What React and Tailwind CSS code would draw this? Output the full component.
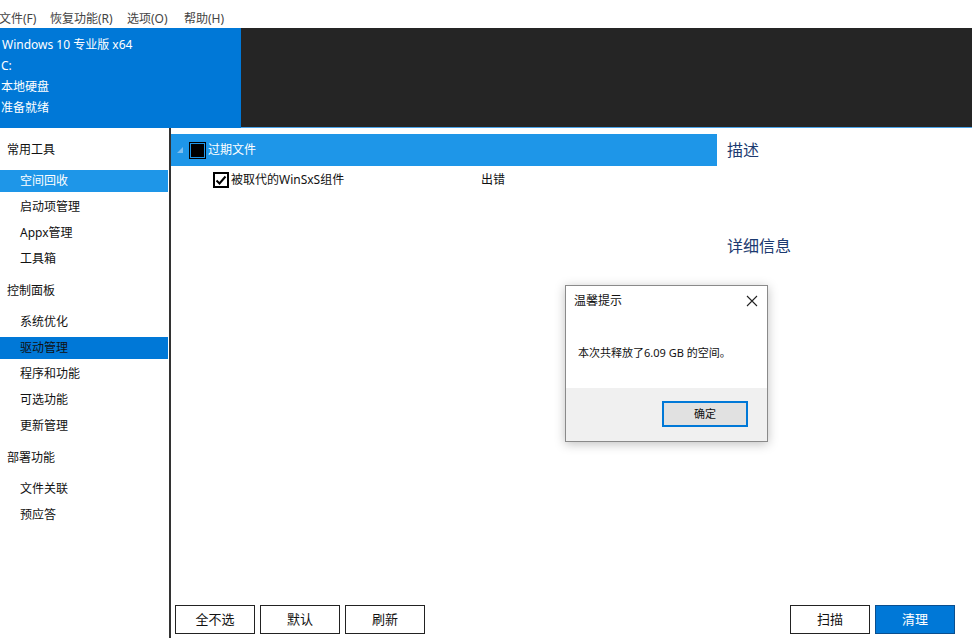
import React from 'react';

const font = { fontFamily: '"Noto Sans", "Noto Sans CJK SC", sans-serif' };

const sidebar = [
  { label: '常用工具', header: true, first: true },
  { label: '空间回收', active: 'light' },
  { label: '启动项管理' },
  { label: 'Appx管理' },
  { label: '工具箱' },
  { label: '控制面板', header: true },
  { label: '系统优化' },
  { label: '驱动管理', active: 'dark' },
  { label: '程序和功能' },
  { label: '可选功能' },
  { label: '更新管理' },
  { label: '部署功能', header: true },
  { label: '文件关联' },
  { label: '预应答' },
];

const Btn = ({ children, primary }) => (
  <button
    className={
      'w-[80px] h-[29px] text-[13px] border ' +
      (primary ? 'bg-[#0078d7] border-[#0a4f8f] text-white' : 'bg-white border-[#222] text-[#111]')
    }
  >
    {children}
  </button>
);

export default function App() {
  return (
    <div className="relative w-[972px] h-[638px] overflow-hidden bg-white flex flex-col" style={font}>
      {/* Menu bar */}
      <div className="h-[28px] flex items-center text-[12px] text-[#444] -ml-[1px] pt-[9px]">
        <span className="w-[51px]">文件(F)</span>
        <span className="w-[77px]">恢复功能(R)</span>
        <span className="w-[57px]">选项(O)</span>
        <span>帮助(H)</span>
      </div>

      {/* Info header */}
      <div className="h-[100px] flex">
        <div className="w-[241px] bg-[#0078d7] text-white text-[12px] leading-[21px] pt-[6px] pl-[1px]">
          <div className="pl-[1px]">Windows 10 专业版 x64</div>
          <div>C:</div>
          <div>本地硬盘</div>
          <div>准备就绪</div>
        </div>
        <div className="flex-1 bg-[#252525] border-b-[1px] border-[#4aa3e8]" />
      </div>

      {/* Main */}
      <div className="flex-1 flex min-h-0">
        <div className="w-[171px] border-r-2 border-[#333] text-[12px] text-[#111]">
          {sidebar.map((it) =>
            it.header ? (
              <div
                key={it.label}
                className={'h-[37px] flex items-center pl-[7px] ' + (it.first ? 'mt-[3px]' : '')}
              >
                {it.label}
              </div>
            ) : (
              <div key={it.label} className="h-[26px] flex items-center">
                <div
                  className={
                    'w-[168px] h-[22px] flex items-center pl-[20px] ' +
                    (it.active === 'light' ? 'bg-[#1e96e8] text-white' : '') +
                    (it.active === 'dark' ? 'bg-[#0078d7] text-[#111]' : '')
                  }
                >
                  {it.label}
                </div>
              </div>
            )
          )}
        </div>

        <div className="flex-1 flex flex-col">
          <div className="flex-1 flex pt-[6px]">
            {/* Tree */}
            <div className="w-[546px]">
              <div className="h-[32px] bg-[#1e96e8] flex items-center text-white text-[12px]">
                <svg width="8" height="8" viewBox="0 0 8 8" className="ml-[5px] mr-[6px]">
                  <path d="M7 1 L7 7 L1 7 Z" fill="#7fbff0" />
                </svg>
                <span className="w-[15px] h-[15px] bg-black border border-[#1e96e8] outline outline-1 outline-black mr-[3px]" />
                <span>过期文件</span>
              </div>
              <div className="h-[28px] flex items-center text-[12px] text-[#111]">
                <span className="ml-[42px] w-[16px] h-[16px] border-2 border-black flex items-center justify-center mr-[2px]">
                  <svg width="12" height="12" viewBox="0 0 12 12">
                    <path d="M1.5 6.5 L4.5 9.5 L10.5 2.5" stroke="#000" strokeWidth="2" fill="none" />
                  </svg>
                </span>
                <span className="w-[250px]">被取代的WinSxS组件</span>
                <span>出错</span>
              </div>
            </div>
            {/* Description */}
            <div className="flex-1 pl-[10px] text-[#1c3a70] text-[16px]">
              <div className="h-[32px] flex items-center">描述</div>
              <div className="mt-[68px]">详细信息</div>
            </div>
          </div>

          <div className="h-[33px] flex items-start pl-[4px] pr-[17px] gap-[5px]">
            <Btn>全不选</Btn>
            <Btn>默认</Btn>
            <Btn>刷新</Btn>
            <div className="flex-1" />
            <Btn>扫描</Btn>
            <Btn primary>清理</Btn>
          </div>
        </div>
      </div>

      {/* Dialog */}
      <div className="absolute left-[565px] top-[285px] w-[203px] h-[157px] bg-white border border-[#8a8a8a] shadow-[0_2px_10px_rgba(0,0,0,0.25)] flex flex-col">
        <div className="h-[30px] flex items-center justify-between pl-[8px] pr-[9px] text-[12px] text-[#111]">
          <span>温馨提示</span>
          <svg width="12" height="12" viewBox="0 0 12 12">
            <path d="M1 1 L11 11 M11 1 L1 11" stroke="#222" strokeWidth="1.1" />
          </svg>
        </div>
        <div className="flex-1 pl-[12px] pt-[29px] text-[11px] text-[#111]">本次共释放了6.09 GB 的空间。</div>
        <div className="h-[53px] bg-[#f0f0f0] flex items-start justify-end pr-[19px] pt-[13px]">
          <button className="w-[86px] h-[26px] bg-[#e1e1e1] border-2 border-[#0078d7] text-[11px] text-[#111]">确定</button>
        </div>
      </div>
    </div>
  );
}
